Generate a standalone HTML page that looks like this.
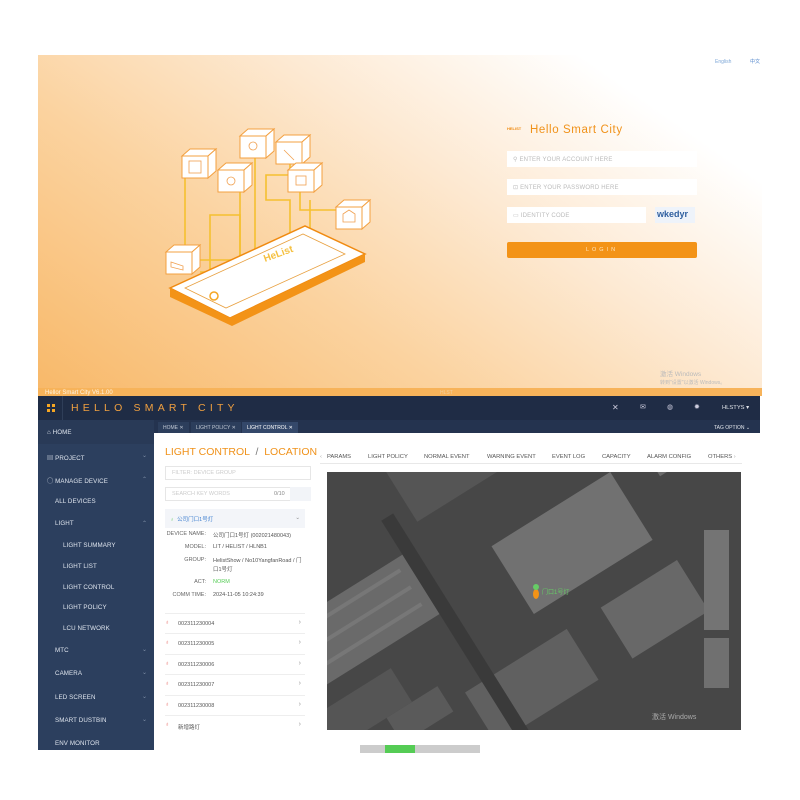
<!DOCTYPE html>
<html><head><meta charset="utf-8">
<style>
*{margin:0;padding:0;box-sizing:border-box}
html,body{width:800px;height:800px;overflow:hidden}
body{background:#fff;position:relative;font-family:"Liberation Sans","Noto Sans CJK SC",sans-serif}
.a{position:absolute}
#top{left:38px;top:55px;width:724px;height:341px;background:linear-gradient(35deg,#f8b868 0%,#fbd3a0 35%,#fde9d2 60%,#fff 85%);overflow:hidden}
.inp{position:absolute;background:#fff;height:16px;font-size:6px;color:#bbb;padding:5px 0 0 6px;letter-spacing:.2px}
#hdr{left:38px;top:396px;width:722px;height:24px;background:#1f2c45}
#side{left:38px;top:420px;width:116px;height:330px;background:#2c3f5e;overflow:hidden}
.si{position:absolute;font-size:6.2px;color:#dfe5ee;letter-spacing:.1px}
.ch{position:absolute;left:104px;font-size:6px;color:#8090a8}
#tabs{left:154px;top:420px;width:606px;height:13px;background:#24334f}
.tb{position:absolute;top:2px;height:11px;background:#2c3e5c;font-size:5px;color:#c0c8d4;padding:3px 5px 0}
#main{left:158px;top:434px;width:597px;height:311px;background:#fff}
.lbl{position:absolute;font-size:5.5px;color:#666;text-align:right;width:60px}
.val{position:absolute;font-size:5.5px;color:#555}
.row{position:absolute;left:165px;width:140px;height:20px;border-top:1px solid #eee;font-size:5.5px;color:#555}
.row i{position:absolute;left:0;top:6px;color:#e8706a;font-style:normal;font-size:6px}
.row b{position:absolute;left:13px;top:7px;font-weight:normal}
.row u{position:absolute;right:4px;top:5px;text-decoration:none;color:#999;font-size:7px}
.nt{position:absolute;top:454px;font-size:5.8px;color:#555}
</style></head><body>
<div id="top" class="a">
<svg class="a" style="left:0;top:0" width="724" height="341" viewBox="38 55 724 341">
<g fill="none" stroke="#f5c030" stroke-width="1.6">
<path d="M185 175 V260 H237 V278"/><path d="M200 272 H210 V215 H240 V275"/>
<path d="M240 190 V260"/><path d="M255 150 V265"/><path d="M290 160 V175 H266 V200 H290 V262 H265 V285"/>
<path d="M300 190 V210 H345 V205"/><path d="M310 200 V262"/>
</g>
<path d="M170 288 L305 226 L365 254 L230 318 Z" fill="#fff" stroke="#f08a10" stroke-width="1.5"/>
<path d="M170 288 L230 318 L365 254 L365 262 L232 326 L170 297 Z" fill="#f39317"/>
<path d="M185 288 L303 234 L345 254 L226 308 Z" fill="none" stroke="#e8a040" stroke-width=".8"/>
<circle cx="214" cy="296" r="4" fill="none" stroke="#f5a623" stroke-width="1.5"/>
<text x="265" y="262" font-size="10" fill="#f5c040" font-weight="bold" transform="rotate(-20 265 262)">HeList</text>
<g fill="#fff" stroke="#f3a040" stroke-width="1">
<g transform="translate(182 156)"><path d="M0 0 H26 V22 H0Z"/><path d="M0 0 L8 -7 H34 L26 0Z"/><path d="M26 0 L34 -7 V15 L26 22Z"/></g>
<g transform="translate(218 170)"><path d="M0 0 H26 V22 H0Z"/><path d="M0 0 L8 -7 H34 L26 0Z"/><path d="M26 0 L34 -7 V15 L26 22Z"/></g>
<g transform="translate(240 136)"><path d="M0 0 H26 V22 H0Z"/><path d="M0 0 L8 -7 H34 L26 0Z"/><path d="M26 0 L34 -7 V15 L26 22Z"/></g>
<g transform="translate(276 142)"><path d="M0 0 H26 V22 H0Z"/><path d="M0 0 L8 -7 H34 L26 0Z"/><path d="M26 0 L34 -7 V15 L26 22Z"/></g>
<g transform="translate(288 170)"><path d="M0 0 H26 V22 H0Z"/><path d="M0 0 L8 -7 H34 L26 0Z"/><path d="M26 0 L34 -7 V15 L26 22Z"/></g>
<g transform="translate(336 207)"><path d="M0 0 H26 V22 H0Z"/><path d="M0 0 L8 -7 H34 L26 0Z"/><path d="M26 0 L34 -7 V15 L26 22Z"/></g>
<g transform="translate(166 252)"><path d="M0 0 H26 V22 H0Z"/><path d="M0 0 L8 -7 H34 L26 0Z"/><path d="M26 0 L34 -7 V15 L26 22Z"/></g>
</g>
<g fill="none" stroke="#f0a050" stroke-width=".8">
<rect x="189" y="161" width="12" height="12"/><circle cx="231" cy="181" r="4"/><circle cx="253" cy="146" r="4"/>
<path d="M284 150 l10 10"/><rect x="296" y="176" width="10" height="9"/><path d="M343 222 v-8 l6 -4 l6 4 v8z"/><path d="M171 262 l12 4 v4 l-12 -3z"/>
</g>
<text x="715" y="63" font-size="5" fill="#7fa8d8">English</text><text x="750" y="63" font-size="5" fill="#5588cc">中文</text>
<text x="507" y="130" font-size="4" fill="#f08a10" font-weight="bold">HELIST</text>
<text x="530" y="133" font-size="11.5" fill="#f0921a" letter-spacing=".6">Hello Smart City</text>
<rect x="38" y="388" width="724" height="8" fill="#f7b35a"/>
<text x="45" y="394" font-size="6" fill="#fff4e0">Hellor Smart City    V6.1.00</text>
<text x="440" y="394" font-size="5" fill="#f0d0a0">HLST</text>
<text x="660" y="376" font-size="6.5" fill="#bbb">激活 Windows</text><text x="660" y="384" font-size="5" fill="#bbb">转到"设置"以激活 Windows。</text>
</svg>
<div class="inp" style="left:469px;top:96px;width:190px">⚲ ENTER YOUR ACCOUNT HERE</div>
<div class="inp" style="left:469px;top:124px;width:190px">⊡ ENTER YOUR PASSWORD HERE</div>
<div class="inp" style="left:469px;top:152px;width:139px">▭ IDENTITY CODE</div>
<div class="a" style="left:617px;top:152px;width:40px;height:16px;background:#eef3fa;color:#3060a0;font-size:9px;font-weight:bold;padding:2px 0 0 2px">wkedyr</div>
<div class="a" style="left:469px;top:187px;width:190px;height:16px;background:#f39317;border-radius:2px;color:#ffe6c0;font-size:5.5px;letter-spacing:3px;text-align:center;padding-top:5px">LOGIN</div>
</div>
<div id="hdr" class="a">
<div class="a" style="left:9px;top:8px;width:8px;height:8px;background:linear-gradient(#f5a623,#f5a623) 0 0/3px 3px no-repeat,linear-gradient(#f5a623,#f5a623) 5px 0/3px 3px no-repeat,linear-gradient(#f5a623,#f5a623) 0 5px/3px 3px no-repeat,linear-gradient(#f5a623,#f5a623) 5px 5px/3px 3px no-repeat"></div>
<div class="a" style="left:24px;top:0;width:1px;height:24px;background:#2f3e58"></div>
<div class="a" style="left:33px;top:6px;font-size:10.5px;color:#f0a040;letter-spacing:4.2px">HELLO SMART CITY</div>
<div class="a" style="left:574px;top:7px;font-size:8px;color:#ccd">✕</div>
<div class="a" style="left:602px;top:7px;font-size:7px;color:#ccd">✉</div>
<div class="a" style="left:629px;top:7px;font-size:7px;color:#ccd">◍</div>
<div class="a" style="left:656px;top:7px;font-size:7px;color:#ccd">✹</div>
<div class="a" style="left:684px;top:9px;font-size:5.8px;color:#e0e4ea">HLSTYS ▾</div>
</div>
<div id="side" class="a">
<div class="a" style="left:0;top:0;width:116px;height:24px;background:#293a57"></div>
<div class="si" style="left:9px;top:9px">⌂ HOME</div>
<div class="si" style="left:9px;top:33px">▤ PROJECT</div><div class="ch" style="top:32px">⌄</div>
<div class="si" style="left:9px;top:56px">◯ MANAGE DEVICE</div><div class="ch" style="top:56px">⌃</div>
<div class="si" style="left:17px;top:78px">ALL DEVICES</div>
<div class="si" style="left:17px;top:100px">LIGHT</div><div class="ch" style="top:100px">⌃</div>
<div class="si" style="left:25px;top:122px">LIGHT SUMMARY</div>
<div class="si" style="left:25px;top:143px">LIGHT LIST</div>
<div class="si" style="left:25px;top:164px">LIGHT CONTROL</div>
<div class="si" style="left:25px;top:184px">LIGHT POLICY</div>
<div class="si" style="left:25px;top:205px">LCU NETWORK</div>
<div class="si" style="left:17px;top:227px">MTC</div><div class="ch" style="top:226px">⌄</div>
<div class="si" style="left:17px;top:250px">CAMERA</div><div class="ch" style="top:249px">⌄</div>
<div class="si" style="left:17px;top:274px">LED SCREEN</div><div class="ch" style="top:273px">⌄</div>
<div class="si" style="left:17px;top:297px">SMART DUSTBIN</div><div class="ch" style="top:296px">⌄</div>
<div class="si" style="left:17px;top:320px">ENV MONITOR</div>
</div>
<div id="tabs" class="a">
<div class="tb" style="left:4px">HOME ✕</div>
<div class="tb" style="left:37px">LIGHT POLICY ✕</div>
<div class="tb" style="left:88px;color:#fff;background:#34486a">LIGHT CONTROL ✕</div>
<div class="a" style="left:556px;top:2px;font-size:5px;color:#e0e4ea;padding:3px 0 0 4px">TAG OPTION ⌄</div>
</div>
<div id="main" class="a"></div>
<div class="a" style="left:165px;top:446px;font-size:10.5px;color:#f0921a">LIGHT CONTROL &nbsp;<span style="color:#777">/</span>&nbsp; LOCATION</div>
<div class="a" style="left:165px;top:466px;width:146px;height:14px;border:1px solid #e6e6e6;font-size:5.5px;color:#ccc;padding:3px 0 0 6px">FILTER: DEVICE GROUP</div>
<div class="a" style="left:165px;top:487px;width:146px;height:14px;border:1px solid #e6e6e6;font-size:5.5px;color:#ccc;padding:3px 0 0 6px">SEARCH KEY WORDS<span style="position:absolute;left:108px;color:#888">0/10</span></div>
<div class="a" style="left:290px;top:487px;width:21px;height:14px;background:#f2f4f8"></div>
<div class="a" style="left:165px;top:509px;width:140px;height:19px;background:#f3f5f9;font-size:5.5px;color:#4080d0;padding:6px 0 0 5px"><span style="color:#6c6">♁</span> &nbsp;公司门口1号灯<span style="position:absolute;right:5px;color:#888">⌄</span></div>
<div class="lbl" style="left:146px;top:531px">DEVICE NAME:</div><div class="val" style="left:213px;top:531px">公司门口1号灯 (002021480043)</div>
<div class="lbl" style="left:146px;top:544px">MODEL:</div><div class="val" style="left:213px;top:544px">LIT / HELIST / HLNB1</div>
<div class="lbl" style="left:146px;top:557px">GROUP:</div><div class="val" style="left:213px;top:557px;width:92px;line-height:9px">HelistShow / No10YangfanRoad / 门口1号灯</div>
<div class="lbl" style="left:146px;top:579px">ACT:</div><div class="val" style="left:213px;top:579px;color:#5c5">NORM</div>
<div class="lbl" style="left:146px;top:592px">COMM TIME:</div><div class="val" style="left:213px;top:592px">2024-11-05 10:24:39</div>
<div class="row" style="top:613px"><i>♁</i><b>002311230004</b><u>›</u></div>
<div class="row" style="top:633px"><i>♁</i><b>002311230005</b><u>›</u></div>
<div class="row" style="top:654px"><i>♁</i><b>002311230006</b><u>›</u></div>
<div class="row" style="top:674px"><i>♁</i><b>002311230007</b><u>›</u></div>
<div class="row" style="top:695px"><i>♁</i><b>002311230008</b><u>›</u></div>
<div class="row" style="top:715px"><i>♁</i><b>新增路灯</b><u>›</u></div>
<div class="nt" style="left:320px;color:#aaa">‹</div>
<div class="nt" style="left:327px">PARAMS</div><div class="nt" style="left:368px">LIGHT POLICY</div>
<div class="nt" style="left:424px">NORMAL EVENT</div><div class="nt" style="left:487px">WARNING EVENT</div>
<div class="nt" style="left:552px">EVENT LOG</div><div class="nt" style="left:602px">CAPACITY</div>
<div class="nt" style="left:647px">ALARM CONFIG</div><div class="nt" style="left:708px">OTHERS <span style="color:#aaa">›</span></div>
<div class="a" style="left:320px;top:463px;width:422px;height:1px;background:#e8e8e8"></div>
<svg class="a" style="left:327px;top:472px" width="414" height="258" viewBox="0 0 414 258">
<rect width="414" height="258" fill="#474747"/>
<g transform="rotate(-32 207 129)">
<rect x="-60" y="20" width="180" height="70" fill="#6a6a6a"/>
<rect x="-50" y="30" width="160" height="4" fill="#777"/><rect x="-50" y="50" width="160" height="4" fill="#777"/><rect x="-50" y="70" width="160" height="4" fill="#777"/>
<rect x="-80" y="110" width="130" height="40" fill="#555"/>
<rect x="150" y="-60" width="110" height="60" fill="#555"/>
<rect x="200" y="60" width="140" height="80" fill="#717171"/>
<rect x="100" y="170" width="120" height="60" fill="#606060"/>
<rect x="-40" y="200" width="100" height="50" fill="#565656"/>
<rect x="260" y="170" width="90" height="60" fill="#686868"/>
<rect x="380" y="20" width="80" height="70" fill="#6c6c6c"/>
<rect x="20" y="150" width="60" height="30" fill="#5a5a5a"/>
<rect x="120" y="-20" width="14" height="320" fill="#3a3a3a"/>
</g>
<rect x="377" y="58" width="25" height="100" fill="#747474"/>
<rect x="377" y="166" width="25" height="50" fill="#707070"/>
<ellipse cx="209" cy="122" rx="3" ry="5" fill="#f39317"/><circle cx="209" cy="115" r="3" fill="#6c6"/>
<text x="215" y="122" font-size="6" fill="#6c6">门口1号灯</text>
<text x="325" y="247" font-size="7" fill="#aaa">激活 Windows</text>
</svg>
<div class="a" style="left:360px;top:745px;width:120px;height:8px;background:#ccc"></div>
<div class="a" style="left:385px;top:745px;width:30px;height:8px;background:#5c5"></div>
</body></html>
